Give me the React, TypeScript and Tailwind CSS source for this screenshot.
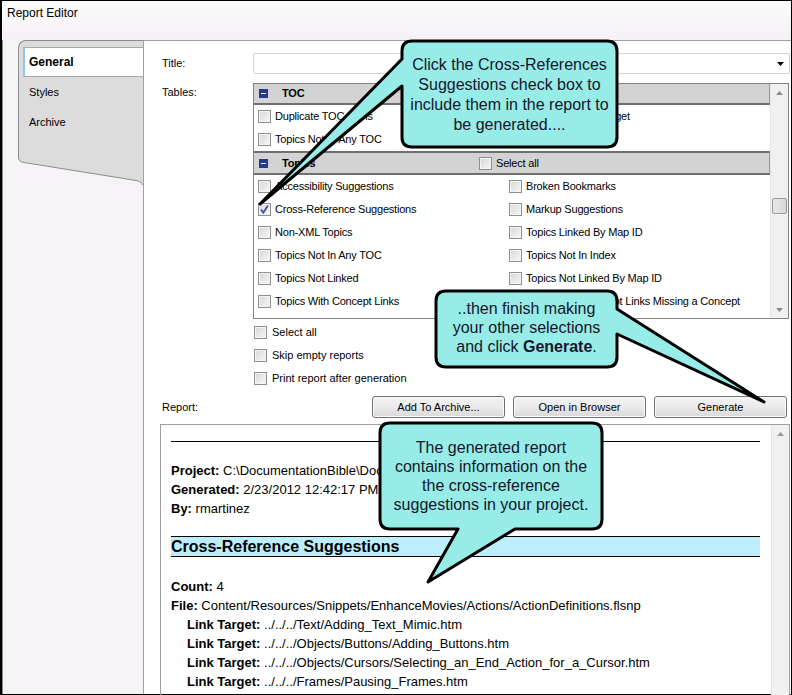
import type { ReactNode } from "react";

const Box = ({ checked = false }: { checked?: boolean }) => (
  <span className="flex h-[13px] w-[13px] shrink-0 items-center justify-center border border-[#8e8f8f] bg-linear-to-br from-[#d6d6d6] to-[#f8f8f8] shadow-[inset_0_0_0_1px_#f4f4f4]">
    {checked && (
      <svg width="11" height="11" viewBox="0 0 11 11">
        <path d="M2 5.5 L4.3 8.6 L9 1.6" fill="none" stroke="#3f55a3" strokeWidth="1.8" />
      </svg>
    )}
  </span>
);

const Item = ({ label, checked }: { label: string; checked?: boolean }) => (
  <div className="flex h-[23px] items-center gap-[4px] whitespace-nowrap">
    <Box checked={checked} />
    <span>{label}</span>
  </div>
);

const Minus = () => (
  <span className="flex h-[9px] w-[9px] shrink-0 items-center justify-center bg-[#25398b]">
    <span className="h-px w-[5px] bg-white" />
  </span>
);

const Arrow = ({ up, color = "#6a6a6a" }: { up?: boolean; color?: string }) => (
  <svg width="7" height="4" viewBox="0 0 7 4">
    <path d={up ? "M0 4 L3.5 0 L7 4 Z" : "M0 0 L7 0 L3.5 4 Z"} fill={color} />
  </svg>
);

const Btn = ({ children }: { children: ReactNode }) => (
  <button className="h-[22px] w-[133px] rounded-[3px] border border-[#707070] bg-linear-to-b from-[#f3f3f3] via-[#ebebeb] to-[#d8d8d8] text-[11px] text-black shadow-[inset_0_0_0_1px_#fbfbfb]">
    {children}
  </button>
);

const tocRows = [
  ["Duplicate TOC Items", "Links To Invalid Target"],
  ["Topics Not In Any TOC", ""],
];

const topicRows: [string, string, boolean?][] = [
  ["Accessibility Suggestions", "Broken Bookmarks"],
  ["Cross-Reference Suggestions", "Markup Suggestions", true],
  ["Non-XML Topics", "Topics Linked By Map ID"],
  ["Topics Not In Any TOC", "Topics Not In Index"],
  ["Topics Not Linked", "Topics Not Linked By Map ID"],
  ["Topics With Concept Links", "Topics With Concept Links Missing a Concept"],
];

const links = [
  "../../../Text/Adding_Text_Mimic.htm",
  "../../../Objects/Buttons/Adding_Buttons.htm",
  "../../../Objects/Cursors/Selecting_an_End_Action_for_a_Cursor.htm",
  "../../../Frames/Pausing_Frames.htm",
];

export default function App() {
  return (
    <div className="relative h-[695px] w-[792px] overflow-hidden font-['Liberation_Sans',Arial,sans-serif] text-black">
      <div className="flex h-full flex-col border border-l-2 border-black bg-[#f7f4f7] shadow-[inset_1px_0_0_#8a8a8a]">
        {/* title bar */}
        <div className="flex h-[39px] items-start bg-linear-to-b from-[#fbfafb] to-[#f5f2f5] pl-[5px] pt-[4px] text-[12px] leading-[16px]">
          Report Editor
        </div>

        <div className="flex min-h-0 flex-1">
          {/* tabs */}
          <div className="w-[141px] shrink-0 pl-[16px]">
            <div className="h-[115px] rounded-tl-[8px] border-l border-t border-[#8c8c8c] bg-[#dcdcdc] pt-[6px] text-[11px]">
              <div className="relative z-10 ml-[4px] -mr-px flex h-[30px] w-[120px] items-center border-y border-l-2 border-y-[#a8a8a8] border-l-[#8fc3f2] bg-white pl-[4px] text-[12px] font-bold">
                General
              </div>
              <div className="flex h-[30px] items-center pl-[10px]">Styles</div>
              <div className="flex h-[30px] items-center pl-[10px]">Archive</div>
            </div>
            <svg width="125" height="30" viewBox="0 0 125 30" className="block">
              <path d="M0 0 V2 Q0 7 6 7.5 L115 25 Q124 26 124.5 30 H125 V0 Z" fill="#dcdcdc" />
              <path d="M0.5 0 V2 Q0.5 7 6 7.5 L115 25 Q124 26 124.5 30" fill="none" stroke="#8c8c8c" />
            </svg>
          </div>

          {/* content */}
          <div className="flex min-w-0 flex-1 flex-col border-l border-t border-[#a0a0a0] bg-white text-[11px]">
            <div className="mt-[12px] flex h-[21px] items-center">
              <div className="w-[109px] pl-[18px]">Title:</div>
              <div className="mr-px flex h-full flex-1 items-center justify-end rounded-[2px] border border-[#d3d3d3] pr-[5px]">
                <Arrow color="#000" />
              </div>
            </div>

            <div className="mt-[9px] flex">
              <div className="w-[109px] pl-[18px] pt-[1px]">Tables:</div>
              <div className="flex h-[236px] w-[536px] border border-[#828282] tracking-[-0.2px]">
                <div className="min-w-0 flex-1 overflow-hidden">
                  <div className="flex h-[21px] items-center border-b-2 border-r border-b-[#6f6f6f] border-r-[#9c9c9c] bg-[#d4d3d4] pl-[5px]">
                    <Minus />
                    <span className="ml-[14px] font-bold">TOC</span>
                  </div>
                  {tocRows.map(([l, r]) => (
                    <div key={l} className="grid grid-cols-[251px_1fr] pl-[4px]">
                      <Item label={l} />
                      {r ? <Item label={r} /> : <div />}
                    </div>
                  ))}
                  <div className="flex h-[24px] items-center border-y-2 border-r border-y-[#6f6f6f] border-r-[#9c9c9c] bg-[#d4d3d4]">
                    <div className="flex w-[225px] items-center pl-[5px]">
                      <Minus />
                      <span className="ml-[14px] font-bold">Topics</span>
                    </div>
                    <Box />
                    <span className="ml-[4px]">Select all</span>
                  </div>
                  {topicRows.map(([l, r, c]) => (
                    <div key={l} className="grid grid-cols-[251px_1fr] pl-[4px]">
                      <Item label={l} checked={c} />
                      <Item label={r} />
                    </div>
                  ))}
                </div>
                <div className="flex w-[18px] flex-col items-center bg-[#f0f0f0] shadow-[inset_1px_0_0_#e4e4e4]">
                  <div className="flex h-[17px] items-center">
                    <Arrow up color="#8a8a8a" />
                  </div>
                  <div className="mt-[97px] h-[16px] w-[15px] rounded-[2px] border border-[#9a9a9a] bg-linear-to-r from-[#e8e8e8] to-[#d8d8d8]" />
                  <div className="flex-1" />
                  <div className="flex h-[17px] items-center">
                    <Arrow color="#8a8a8a" />
                  </div>
                </div>
              </div>
            </div>

            <div className="mt-[2px] pl-[110px]">
              {["Select all", "Skip empty reports", "Print report after generation"].map((t) => (
                <div key={t} className="flex h-[23px] items-center gap-[5px]">
                  <Box />
                  <span>{t}</span>
                </div>
              ))}
            </div>

            <div className="mt-[6px] flex h-[22px] items-center pr-[4px]">
              <div className="flex-1 pl-[18px]">Report:</div>
              <div className="flex gap-[8px]">
                <Btn>Add To Archive...</Btn>
                <Btn>Open in Browser</Btn>
                <Btn>Generate</Btn>
              </div>
            </div>

            <div className="mb-[-2px] ml-[16px] mr-px mt-[6px] flex min-h-0 flex-1 border border-[#a0a0a0] text-[13px] leading-[19px]">
              <div className="min-w-0 flex-1 overflow-hidden pl-[10px] pr-[11px] pt-[16px] whitespace-nowrap">
                <div className="border-t border-black" />
                <div className="mt-[19px]">
                  <b>Project:</b> C:\DocumentationBible\DocumentationBible.flprj
                </div>
                <div>
                  <b>Generated:</b> 2/23/2012 12:42:17 PM
                </div>
                <div>
                  <b>By:</b> rmartinez
                </div>
                <div className="mt-[18px] border-y border-black bg-[#bdeefc] text-[16px] font-bold leading-[19px]">
                  Cross-Reference Suggestions
                </div>
                <div className="mt-[20px]">
                  <b>Count:</b> 4
                </div>
                <div>
                  <b>File:</b> Content/Resources/Snippets/EnhanceMovies/Actions/ActionDefinitions.flsnp
                </div>
                {links.map((l) => (
                  <div key={l} className="pl-[16px]">
                    <b>Link Target:</b> {l}
                  </div>
                ))}
              </div>
              <div className="flex w-[18px] flex-col items-center bg-[#f0f0f0] shadow-[inset_1px_0_0_#e4e4e4]">
                <div className="flex h-[17px] items-center">
                  <Arrow up color="#9a9a9a" />
                </div>
              </div>
            </div>
          </div>
        </div>
      </div>

      {/* callouts */}
      <svg className="pointer-events-none absolute left-0 top-0" width="792" height="695" viewBox="0 0 792 695">
        <g fill="#97ece8" stroke="#000" strokeWidth="3" strokeLinejoin="round">
          <path d="M412 41 H607 Q617 41 617 51 V137 Q617 147 607 147 H412 Q402 147 402 137 V86 L260 204 L402 59 V51 Q402 41 412 41 Z" />
          <path d="M446 291 H607 Q617 291 617 301 V309 L764 402 L617 334 V357 Q617 367 607 367 H446 Q436 367 436 357 V301 Q436 291 446 291 Z" />
          <path d="M390 423 H592 Q602 423 602 433 V519 Q602 529 592 529 H515 L428 582 L458 529 H390 Q380 529 380 519 V433 Q380 423 390 423 Z" />
        </g>
      </svg>
      <div className="absolute left-[402px] top-[55px] w-[215px] whitespace-nowrap text-center text-[16px] leading-[20px] text-[#16162a]">
        Click the Cross-References
        <br />
        Suggestions check box to
        <br />
        include them in the report to
        <br />
        be generated....
      </div>
      <div className="absolute left-[436px] top-[299px] w-[181px] whitespace-nowrap text-center text-[16px] leading-[19px] text-[#16162a]">
        ..then finish making
        <br />
        your other selections
        <br />
        and click <b>Generate</b>.
      </div>
      <div className="absolute left-[380px] top-[438px] w-[222px] whitespace-nowrap text-center text-[16px] leading-[19px] text-[#16162a]">
        The generated report
        <br />
        contains information on the
        <br />
        the cross-reference
        <br />
        suggestions in your project.
      </div>
    </div>
  );
}
